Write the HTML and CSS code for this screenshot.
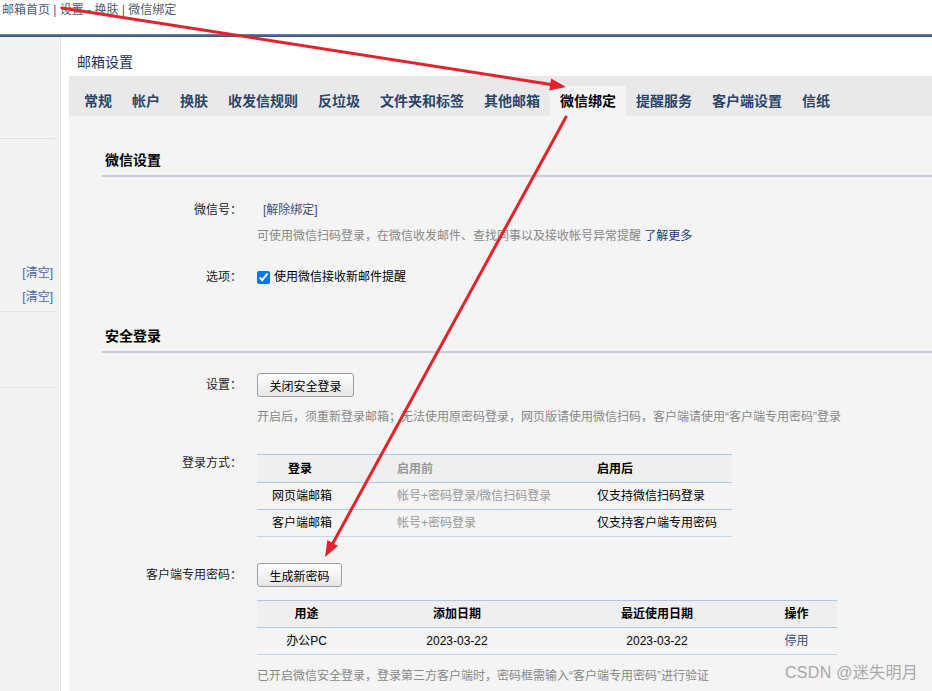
FILE: index.html
```html
<!DOCTYPE html>
<html lang="zh-CN">
<head>
<meta charset="utf-8">
<title>邮箱设置 - 微信绑定</title>
<link rel="stylesheet" href="styles.css">
</head>
<body>
<div class="topbar">邮箱首页 | 设置 - 换肤 | 微信绑定</div>
<div class="rule"></div>
<div class="layout">
  <aside class="sidebar">
    <div class="side-group g1"></div>
    <div class="side-group g2">
      <a class="clear">[清空]</a>
      <a class="clear">[清空]</a>
    </div>
    <div class="side-group g3"></div>
  </aside>
  <main class="main">
    <div class="page-title">邮箱设置</div>
    <ul class="tabs">
      <li>常规</li>
      <li>帐户</li>
      <li>换肤</li>
      <li>收发信规则</li>
      <li>反垃圾</li>
      <li>文件夹和标签</li>
      <li>其他邮箱</li>
      <li class="active">微信绑定</li>
      <li>提醒服务</li>
      <li>客户端设置</li>
      <li>信纸</li>
    </ul>
    <div class="content">
      <h3 class="sec-title first">微信设置</h3>
      <div class="row r-wx">
        <div class="label">微信号：</div>
        <div class="value">
          <div class="line"><a class="link unbind">[解除绑定]</a></div>
          <div class="desc d1">可使用微信扫码登录，在微信收发邮件、查找同事以及接收帐号异常提醒 <a class="more">了解更多</a></div>
        </div>
      </div>
      <div class="row r-opt">
        <div class="label">选项：</div>
        <div class="value">
          <label class="check"><input type="checkbox" checked>使用微信接收新邮件提醒</label>
        </div>
      </div>

      <h3 class="sec-title second">安全登录</h3>
      <div class="row r-set">
        <div class="label btn-label">设置：</div>
        <div class="value">
          <button class="btn b1">关闭安全登录</button>
          <div class="desc d2">开启后，须重新登录邮箱；无法使用原密码登录，网页版请使用微信扫码，客户端请使用“客户端专用密码”登录</div>
        </div>
      </div>
      <div class="row r-mode">
        <div class="label">登录方式：</div>
        <div class="value">
          <table class="tbl t1">
            <colgroup><col class="c1"><col class="c2"><col class="c3"></colgroup>
            <thead>
              <tr><th class="h-login">登录</th><th class="muted">启用前</th><th>启用后</th></tr>
            </thead>
            <tbody>
              <tr><td>网页端邮箱</td><td class="muted">帐号+密码登录/微信扫码登录</td><td>仅支持微信扫码登录</td></tr>
              <tr><td>客户端邮箱</td><td class="muted">帐号+密码登录</td><td>仅支持客户端专用密码</td></tr>
            </tbody>
          </table>
        </div>
      </div>
      <div class="row r-pwd">
        <div class="label btn-label">客户端专用密码：</div>
        <div class="value">
          <button class="btn b2">生成新密码</button>
          <table class="tbl t2">
            <colgroup><col class="d-c1"><col class="d-c2"><col class="d-c3"><col class="d-c4"></colgroup>
            <thead>
              <tr><th>用途</th><th>添加日期</th><th>最近使用日期</th><th>操作</th></tr>
            </thead>
            <tbody>
              <tr><td>办公PC</td><td>2023-03-22</td><td>2023-03-22</td><td><a class="link">停用</a></td></tr>
            </tbody>
          </table>
          <div class="desc d3">已开启微信安全登录，登录第三方客户端时，密码框需输入“客户端专用密码”进行验证</div>
        </div>
      </div>
    </div>
  </main>
</div>

<div class="watermark">CSDN @迷失明月</div>

<svg class="arrows" width="932" height="691" viewBox="0 0 932 691" xmlns="http://www.w3.org/2000/svg">
  <line x1="62" y1="8" x2="551" y2="84.5" stroke="#e5222b" stroke-width="3" stroke-linecap="round"/>
  <polygon points="566,87 549.3,90.4 551.1,78.6" fill="#e5222b"/>
  <line x1="566" y1="117" x2="333" y2="543" stroke="#e5222b" stroke-width="3" stroke-linecap="round"/>
  <polygon points="325,557 338,545.9 327.4,540.1" fill="#e5222b"/>
</svg>
</body>
</html>
```
FILE: styles.css
```css
* { box-sizing: border-box; }
html, body { margin: 0; padding: 0; }
body {
  width: 932px;
  height: 691px;
  overflow: hidden;
  background: #fff;
  font-family: "Liberation Sans", "Noto Sans CJK SC", sans-serif;
  font-size: 12px;
  color: #000;
  position: relative;
}
a { text-decoration: none; cursor: pointer; }

.topbar {
  height: 34px;
  padding: 1px 0 0 2px;
  line-height: 18px;
  color: #4d5a78;
}
.rule {
  height: 3px;
  background: linear-gradient(#6a86ad, #2f4d7a);
}

.layout {
  display: flex;
  height: 654px;
}
.sidebar {
  width: 61px;
  flex: none;
  background: #f3f3f3;
  border-right: 1px solid #e2e2e2;
}
.side-group {
  margin-right: 5px;
  border-bottom: 1px solid #e0e0e0;
}
.g1 { height: 102px; }
.g2 {
  height: 173px;
  display: flex;
  flex-direction: column;
  justify-content: flex-end;
  align-items: flex-end;
  padding: 0 2px 2px 0;
}
.g3 { height: 76px; }
.clear {
  color: #4763a3;
  line-height: 24px;
}

.main {
  flex: 1;
  margin-left: 8px;
  display: flex;
  flex-direction: column;
}
.page-title {
  height: 39px;
  padding: 15px 0 4px 8px;
  font-size: 14px;
  line-height: 20px;
  color: #1b3358;
}
.tabs {
  list-style: none;
  margin: 0;
  padding: 0 0 0 5px;
  height: 40px;
  background: #e9e9e9;
  display: flex;
  align-items: flex-end;
}
.tabs li {
  height: 30px;
  line-height: 30px;
  padding: 0 10px;
  font-size: 14px;
  font-weight: bold;
  color: #2b4569;
}
.tabs li.active {
  background: #f4f4f4;
  color: #000;
}

.content {
  flex: 1;
  background: #f4f4f4;
  padding: 34px 0 0 33px;
}
.sec-title {
  margin: 0;
  padding: 0 0 5px 3px;
  font-size: 14px;
  line-height: 20px;
  font-weight: bold;
  border-bottom: 2px solid #c9cdd9;
}
.sec-title.second { margin-top: 40px; }

.row {
  display: flex;
  gap: 15px;
}
.label {
  width: 140px;
  flex: none;
  text-align: right;
  line-height: 18px;
  color: #222;
}
.btn-label { line-height: 24px; }
.value { flex: 1; }
.line { line-height: 18px; padding-left: 6px; }
.link { color: #3a4e78; }
.more { color: #1c3a6d; }
.desc {
  line-height: 18px;
  color: #888;
}

.r-wx { margin-top: 24px; }
.d1 { margin-top: 8px; }
.r-opt { margin-top: 23px; }
.check {
  display: flex;
  align-items: center;
  line-height: 18px;
}
.check input {
  margin: 0 4px 0 0;
  width: 13px;
  height: 13px;
}

.r-set { margin-top: 20px; }
.btn {
  display: block;
  height: 24px;
  padding: 0 11px;
  font: inherit;
  font-size: 12px;
  color: #000;
  background: linear-gradient(#ffffff, #e6e6e6);
  border: 1px solid #9e9e9e;
  border-radius: 3px;
}
.b1 { width: 97px; }
.b2 { width: 85px; }
.d2 { margin-top: 11px; }

.r-mode { margin-top: 28px; }
.tbl {
  border-collapse: collapse;
  table-layout: fixed;
}
.tbl tr { border-top: 1px solid #aec7e6; }
.tbl tbody tr:last-child { border-bottom: 1px solid #c5d5e8; }
.tbl thead tr { background: #efefef; }
.tbl th, .tbl td {
  height: 27px;
  padding: 0;
  line-height: 18px;
  font-weight: normal;
  white-space: nowrap;
}
.tbl th { font-weight: bold; }
.t1 { width: 475px; }
.t1 .c1 { width: 125px; }
.t1 .c2 { width: 200px; }
.t1 .c3 { width: 150px; }
.t1 th, .t1 td { text-align: left; padding-left: 15px; }
.t1 th.h-login { padding-left: 31px; }
.t1 thead th { height: 28px; }
.muted { color: #999; }

.r-pwd { margin-top: 26px; }
.t2 {
  width: 580px;
  margin-top: 13px;
}
.t2 .d-c1 { width: 99px; }
.t2 .d-c2 { width: 202px; }
.t2 .d-c3 { width: 198px; }
.t2 .d-c4 { width: 81px; }
.t2 th, .t2 td { text-align: center; }
.d3 { margin-top: 12px; }

.watermark {
  position: absolute;
  left: 785px;
  top: 663px;
  font-size: 16px;
  line-height: 20px;
  color: #a8a8a8;
  font-family: "Liberation Sans", "Noto Sans CJK SC", sans-serif;
  letter-spacing: 0.3px;
}
.arrows {
  position: absolute;
  left: 0;
  top: 0;
  pointer-events: none;
}
```
